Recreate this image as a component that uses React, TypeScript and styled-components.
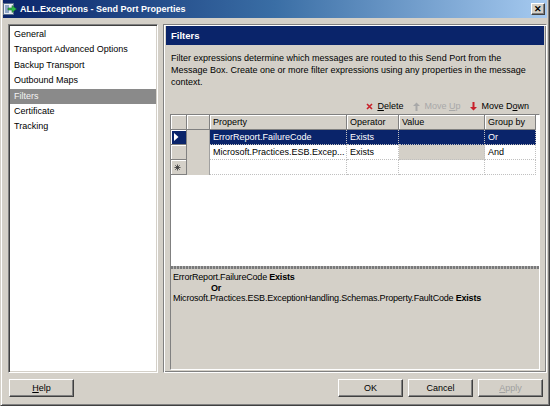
import styled, { createGlobalStyle } from 'styled-components';

const GlobalStyle = createGlobalStyle`
  html, body { margin: 0; padding: 0; background: #d4d0c8; }
  body {
    font-family: "Liberation Sans", Arial, sans-serif;
    font-size: 9px;
    color: #000;
  }
  * { box-sizing: border-box; }
`;

const navItems = [
  'General',
  'Transport Advanced Options',
  'Backup Transport',
  'Outbound Maps',
  'Filters',
  'Certificate',
  'Tracking',
];

type Row = {
  property: string;
  operator: string;
  groupBy: string;
  selected?: boolean;
};

const rows: Row[] = [
  { property: 'ErrorReport.FailureCode', operator: 'Exists', groupBy: 'Or', selected: true },
  { property: 'Microsoft.Practices.ESB.Excep...', operator: 'Exists', groupBy: 'And' },
];

function AppIcon() {
  return (
    <svg width="14" height="14" viewBox="0 0 14 14">
      <rect x="0.5" y="1.5" width="10" height="11" fill="#e8ecf4" stroke="#5a6e8c" />
      <rect x="2" y="3" width="4" height="8" fill="#8fa6c8" />
      <path d="M5 6h4V3.5L13.5 7 9 10.5V8H5z" fill="#2fb84a" stroke="#17702a" strokeWidth="0.6" />
    </svg>
  );
}

function DeleteIcon() {
  return (
    <svg width="7" height="7" viewBox="0 0 7 7">
      <path d="M1 1l5 5M6 1L1 6" stroke="#c8202a" strokeWidth="1.6" />
    </svg>
  );
}

function ArrowIcon({ down, color }: { down?: boolean; color: string }) {
  return (
    <svg width="7" height="9" viewBox="0 0 7 9">
      <g transform={down ? 'rotate(180 3.5 4.5)' : undefined}>
        <path d="M3.5 0.5L7 4H4.5v5h-2V4H0z" fill={color} />
      </g>
    </svg>
  );
}

function CurrentRowIcon() {
  return (
    <svg width="5" height="8" viewBox="0 0 5 8">
      <path d="M0 0l4.5 4L0 8z" fill="#fff" />
    </svg>
  );
}

function NewRowIcon() {
  return (
    <svg width="7" height="7" viewBox="0 0 7 7">
      <path d="M3.5 0.5v6M0.5 3.5h6M1.3 1.3l4.4 4.4M5.7 1.3L1.3 5.7" stroke="#404040" strokeWidth="0.9" />
    </svg>
  );
}

export default function App() {
  return (
    <>
      <GlobalStyle />
      <Window>
        <TitleBar>
          <AppIcon />
          <TitleText>ALL.Exceptions - Send Port Properties</TitleText>
          <CloseButton>✕</CloseButton>
        </TitleBar>

        <Main>
          <NavList>
            {navItems.map((item) => (
              <NavItem key={item} $active={item === 'Filters'}>
                {item}
              </NavItem>
            ))}
          </NavList>

          <Panel>
            <PanelHeader>Filters</PanelHeader>
            <PanelBody>
              <Description>
                Filter expressions determine which messages are routed to this Send Port from the
                <br />
                Message Box. Create one or more filter expressions using any properties in the message
                <br />
                context.
              </Description>

              <Toolbar>
                <ToolButton>
                  <DeleteIcon />
                  <span>
                    <u>D</u>elete
                  </span>
                </ToolButton>
                <ToolButton $disabled>
                  <ArrowIcon color="#a8a8a8" />
                  <span>
                    Move <u>U</u>p
                  </span>
                </ToolButton>
                <ToolButton>
                  <ArrowIcon down color="#c8202a" />
                  <span>
                    Move D<u>o</u>wn
                  </span>
                </ToolButton>
              </Toolbar>

              <EditorBox>
                <GridArea>
                  <GridTable>
                    <colgroup>
                      <col style={{ width: 16 }} />
                      <col style={{ width: 23 }} />
                      <col style={{ width: 137 }} />
                      <col style={{ width: 52 }} />
                      <col style={{ width: 86 }} />
                      <col style={{ width: 51 }} />
                    </colgroup>
                    <thead>
                      <tr>
                        <HeadCell />
                        <HeadCell />
                        <HeadCell>Property</HeadCell>
                        <HeadCell>Operator</HeadCell>
                        <HeadCell>Value</HeadCell>
                        <HeadCell>Group by</HeadCell>
                      </tr>
                    </thead>
                    <tbody>
                      {rows.map((row) => (
                        <tr key={row.property}>
                          <RowHeader $selected={row.selected}>
                            {row.selected && <CurrentRowIcon />}
                          </RowHeader>
                          <BlankCell />
                          <Cell $selected={row.selected}>{row.property}</Cell>
                          <Cell $selected={row.selected}>{row.operator}</Cell>
                          <Cell $selected={row.selected} $disabled={!row.selected} />
                          <Cell $selected={row.selected}>{row.groupBy}</Cell>
                        </tr>
                      ))}
                      <tr>
                        <RowHeader>
                          <NewRowIcon />
                        </RowHeader>
                        <BlankCell />
                        <Cell />
                        <Cell />
                        <Cell />
                        <Cell />
                      </tr>
                    </tbody>
                  </GridTable>
                </GridArea>
                <Splitter />
                <Expression>
                  <div>
                    ErrorReport.FailureCode <b>Exists</b>
                  </div>
                  <Conjunction>Or</Conjunction>
                  <div>
                    Microsoft.Practices.ESB.ExceptionHandling.Schemas.Property.FaultCode <b>Exists</b>
                  </div>
                </Expression>
              </EditorBox>
            </PanelBody>
          </Panel>
        </Main>

        <Footer>
          <DialogButton>
            <u>H</u>elp
          </DialogButton>
          <Spacer />
          <DialogButton>OK</DialogButton>
          <DialogButton>Cancel</DialogButton>
          <DialogButton $disabled>
            <u>A</u>pply
          </DialogButton>
        </Footer>
      </Window>
    </>
  );
}

const Window = styled.div`
  width: 550px;
  height: 406px;
  display: flex;
  flex-direction: column;
  background: #d4d0c8;
  border: 1px solid;
  border-top: 0;
  border-color: #d4d0c8 #404040 #404040 #d4d0c8;
  box-shadow: inset 1px 0 #ffffff, inset -1px -1px #808080;
  padding: 0 2px 2px 2px;
`;

const TitleBar = styled.div`
  height: 18px;
  flex: none;
  display: flex;
  align-items: center;
  gap: 3px;
  padding: 0 2px 0 0;
  background: linear-gradient(90deg, #0a246a 0%, #3a6ea5 50%, #a6caf0 100%);
`;

const TitleText = styled.div`
  color: #fff;
  font-weight: bold;
  font-size: 9px;
  white-space: nowrap;
`;

const CloseButton = styled.div`
  margin-left: auto;
  width: 14px;
  height: 12px;
  display: flex;
  align-items: center;
  justify-content: center;
  font-size: 9px;
  font-weight: bold;
  background: #d4d0c8;
  border: 1px solid;
  border-color: #fff #404040 #404040 #fff;
  box-shadow: inset -1px -1px #808080;
`;

const Main = styled.div`
  flex: 1;
  min-height: 0;
  display: flex;
  gap: 5px;
  padding: 6px 0 0 5px;
`;

const NavList = styled.div`
  width: 150px;
  flex: none;
  background: #fff;
  border: 1px solid;
  border-color: #808080 #fff #fff #808080;
  box-shadow: inset 1px 1px #404040, inset -1px -1px #d4d0c8;
  padding: 2px 1px 0 1px;
`;

const NavItem = styled.div<{ $active?: boolean }>`
  height: 15.4px;
  line-height: 15.4px;
  padding-left: 4px;
  white-space: nowrap;
  background: ${(p) => (p.$active ? '#8a8a8a' : 'transparent')};
  color: ${(p) => (p.$active ? '#f4f4f4' : '#000')};
`;

const Panel = styled.div`
  flex: 1;
  display: flex;
  flex-direction: column;
  border: 1px solid;
  border-color: #808080 #fff #fff #808080;
  box-shadow: inset 1px 1px #fff, inset -1px -1px #808080;
  padding: 1px 2px 1px 2px;
`;

const PanelHeader = styled.div`
  height: 19px;
  flex: none;
  display: flex;
  align-items: center;
  padding-left: 5px;
  background: #0a246a;
  color: #fff;
  font-weight: bold;
  font-size: 9.5px;
`;

const PanelBody = styled.div`
  flex: 1;
  min-height: 0;
  display: flex;
  flex-direction: column;
  padding: 0 4px 1px 4px;
`;

const Description = styled.div`
  margin-top: 7px;
  padding-left: 1px;
  line-height: 12px;
  white-space: nowrap;
`;

const Toolbar = styled.div`
  display: flex;
  justify-content: flex-end;
  align-items: center;
  gap: 10px;
  height: 14px;
  margin-top: 11px;
  padding-right: 11px;
`;

const ToolButton = styled.div<{ $disabled?: boolean }>`
  display: flex;
  align-items: center;
  gap: 4px;
  color: ${(p) => (p.$disabled ? '#a8a8a8' : '#000')};
`;

const EditorBox = styled.div`
  flex: 1;
  min-height: 0;
  margin-top: 1px;
  display: flex;
  flex-direction: column;
  border: 1px solid;
  border-color: #808080 #fff #fff #808080;
`;

const GridArea = styled.div`
  height: 151px;
  flex: none;
  background: #fff;
`;

const GridTable = styled.table`
  border-collapse: separate;
  border-spacing: 0;
  table-layout: fixed;
  width: 365px;
`;

const HeadCell = styled.th`
  height: 15px;
  padding: 0 0 0 3px;
  text-align: left;
  font-weight: normal;
  white-space: nowrap;
  background: #d4d0c8;
  border-right: 1px solid #808080;
  border-bottom: 1px solid #808080;
  box-shadow: inset 1px 1px #fff;
`;

const RowHeader = styled.td<{ $selected?: boolean }>`
  height: 15px;
  padding: 0 0 0 3px;
  vertical-align: middle;
  line-height: 0;
  background: ${(p) => (p.$selected ? '#0a246a' : '#d4d0c8')};
  border-right: 1px solid #808080;
  border-bottom: 1px solid #808080;
  box-shadow: inset 1px 1px #fff;
`;

const BlankCell = styled.td`
  height: 15px;
  padding: 0;
  background: #d4d0c8;
  border-right: 1px solid #a0a0a0;
`;

const Cell = styled.td<{ $selected?: boolean; $disabled?: boolean }>`
  height: 15px;
  padding: 0 0 0 3px;
  overflow: hidden;
  white-space: nowrap;
  background: ${(p) => (p.$selected ? '#0a246a' : p.$disabled ? '#d4d0c8' : '#fff')};
  color: ${(p) => (p.$selected ? '#fff' : '#000')};
  border-right: 1px dotted #c0c0c0;
  border-bottom: 1px dotted #c0c0c0;
`;

const Splitter = styled.div`
  height: 3px;
  flex: none;
  background: repeating-linear-gradient(90deg, #7a7a7a 0 2px, #b4b4b4 2px 3px);
`;

const Expression = styled.div`
  flex: 1;
  padding: 3px 2px;
  line-height: 10.5px;
  white-space: nowrap;
  letter-spacing: -0.2px;
`;

const Conjunction = styled.div`
  padding-left: 38px;
  font-weight: bold;
`;

const Footer = styled.div`
  height: 30px;
  flex: none;
  display: flex;
  align-items: center;
  gap: 5px;
  padding: 0 4px 0 6px;
`;

const Spacer = styled.div`
  flex: 1;
`;

const DialogButton = styled.div<{ $disabled?: boolean }>`
  width: 65px;
  height: 18px;
  display: flex;
  align-items: center;
  justify-content: center;
  background: #d4d0c8;
  color: ${(p) => (p.$disabled ? '#a0a0a0' : '#000')};
  border: 1px solid;
  border-color: #fff #404040 #404040 #fff;
  box-shadow: inset -1px -1px #808080;
`;
